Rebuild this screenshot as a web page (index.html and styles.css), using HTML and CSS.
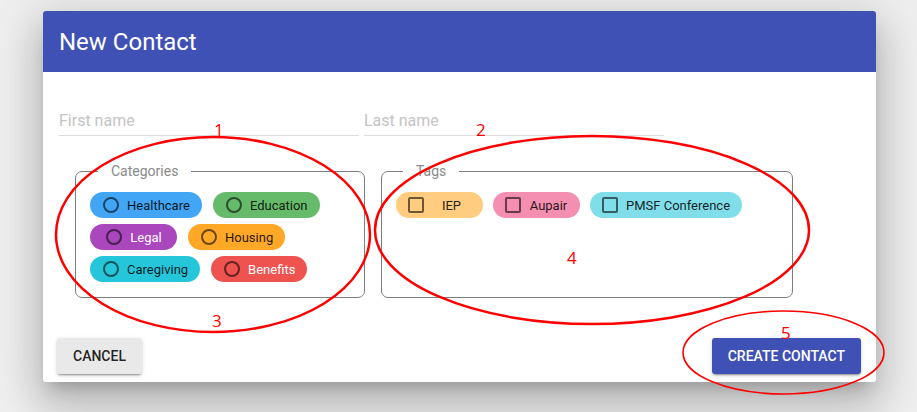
FILE: index.html
```html
<!DOCTYPE html>
<html lang="en">
<head>
<meta charset="utf-8">
<title>New Contact</title>
<link rel="stylesheet" href="styles.css">
</head>
<body>
<div class="dialog">
  <header class="dialog-title">New Contact</header>
  <div class="dialog-content">
    <div class="name-row">
      <input class="text-field" type="text" placeholder="First name">
      <input class="text-field" type="text" placeholder="Last name">
    </div>
    <div class="groups">
      <fieldset class="group group-categories">
        <legend class="group-legend legend-categories">Categories</legend>
        <div class="chips">
          <span class="chip cat chip-healthcare"><span class="radio"></span><span class="chip-label">Healthcare</span></span>
          <span class="chip cat chip-education"><span class="radio"></span><span class="chip-label">Education</span></span>
          <span class="chip cat chip-legal"><span class="radio"></span><span class="chip-label">Legal</span></span>
          <span class="chip cat chip-housing"><span class="radio"></span><span class="chip-label">Housing</span></span>
          <span class="chip cat chip-caregiving"><span class="radio"></span><span class="chip-label">Caregiving</span></span>
          <span class="chip cat chip-benefits"><span class="radio"></span><span class="chip-label">Benefits</span></span>
        </div>
      </fieldset>
      <fieldset class="group group-tags">
        <legend class="group-legend legend-tags">Tags</legend>
        <div class="chips chips-tags">
          <span class="chip tag chip-iep"><span class="checkbox"></span><span class="tag-label">IEP</span></span>
          <span class="chip tag chip-aupair"><span class="checkbox"></span><span class="tag-label">Aupair</span></span>
          <span class="chip tag chip-pmsf"><span class="checkbox"></span><span class="tag-label">PMSF Conference</span></span>
        </div>
      </fieldset>
    </div>
  </div>
  <div class="actions">
    <button class="btn btn-default" type="button">Cancel</button>
    <button class="btn btn-primary" type="button">Create contact</button>
  </div>
</div>

<svg class="annotations" width="917" height="412" viewBox="0 0 917 412" aria-hidden="true">
  <ellipse cx="213" cy="234.5" rx="157" ry="97.5" />
  <ellipse cx="592" cy="230" rx="217" ry="94" />
  <ellipse class="thin" cx="783.5" cy="352.5" rx="100.5" ry="41.5" />
  <text x="214" y="135.5">1</text>
  <text x="476" y="136">2</text>
  <text x="212" y="327">3</text>
  <text x="567" y="264">4</text>
  <text x="781" y="339">5</text>
</svg>
</body>
</html>
```

FILE: styles.css
```css
* {
  box-sizing: border-box;
}

html, body {
  margin: 0;
  height: 100%;
}

body {
  background: #eeeeee;
  padding: 11px 0 0 43px;
  font-family: Roboto, "Liberation Sans", Arial, sans-serif;
  position: relative;
  overflow: hidden;
}

.dialog {
  width: 833px;
  height: 371px;
  background: #ffffff;
  border-radius: 3px;
  display: flex;
  flex-direction: column;
  box-shadow: 0 11px 15px -7px rgba(0, 0, 0, 0.2),
              0 24px 38px 3px rgba(0, 0, 0, 0.14),
              0 9px 46px 8px rgba(0, 0, 0, 0.12);
}

.dialog-title {
  height: 61px;
  background: #3f51b5;
  color: #ffffff;
  border-radius: 3px 3px 0 0;
  display: flex;
  align-items: center;
  padding: 0 16px 0 16px;
  font-size: 24px;
  font-weight: 400;
  line-height: 28px;
}

.dialog-content {
  padding: 34px 16px 0 16px;
}

.name-row {
  display: flex;
  gap: 5px;
}

.text-field {
  width: 300px;
  height: 30px;
  border: 0;
  border-bottom: 1px solid #dddddd;
  padding: 0;
  margin: 0;
  font-family: Roboto, "Liberation Sans", Arial, sans-serif;
  font-size: 16px;
  color: #333333;
  background: transparent;
  outline: none;
}

.text-field::placeholder {
  color: #c4c4c4;
}

.groups {
  display: flex;
  gap: 16px;
  margin-top: 27px;
  padding-left: 16px;
}

.group {
  margin: 0;
  border: 1px solid #7d7d7d;
  border-radius: 7px;
  padding: 13px 14px 15px 14px;
  min-width: 0;
}

.group-categories {
  width: 290px;
}

.group-tags {
  width: 412px;
}

.group-legend {
  font-size: 14px;
  line-height: 16px;
  color: #8a8a8a;
  padding: 0 13px;
}

.legend-categories {
  margin-left: 8px;
}

.legend-tags {
  margin-left: 7px;
}

.chips {
  display: flex;
  flex-wrap: wrap;
  column-gap: 11px;
  row-gap: 6px;
  align-content: flex-start;
}

.chips-tags {
  column-gap: 10px;
}

.chip {
  height: 26px;
  border-radius: 13px;
  display: inline-flex;
  align-items: center;
  font-size: 13px;
  color: rgba(0, 0, 0, 0.87);
  white-space: nowrap;
}

.chip.cat {
  min-width: 87px;
  justify-content: center;
  padding: 0 12px 0 13px;
  gap: 8px;
}

.chip.tag {
  padding: 0 12px;
}

.radio {
  width: 16px;
  height: 16px;
  border: 2px solid rgba(0, 0, 0, 0.58);
  border-radius: 50%;
  flex: none;
}

.checkbox {
  width: 16px;
  height: 16px;
  border: 2px solid rgba(0, 0, 0, 0.58);
  border-radius: 2px;
  flex: none;
}

.tag-label {
  min-width: 39px;
  margin-left: 8px;
  text-align: center;
}

.chip-healthcare { background: #42a5f5; }
.chip-education { background: #66bb6a; }
.chip-legal { background: #ab47bc; color: #ffffff; }
.chip-housing { background: #ffa726; }
.chip-caregiving { background: #26c6da; }
.chip-benefits { background: #ef5350; color: #ffffff; }
.chip-iep { background: #ffcc80; }
.chip-aupair { background: #f48fb1; }
.chip-pmsf { background: #80deea; }

.actions {
  margin-top: auto;
  display: flex;
  justify-content: space-between;
  align-items: center;
  padding: 0 15px 8px 14px;
}

.btn {
  height: 36px;
  padding: 0 16px;
  border: 0;
  border-radius: 3px;
  font-family: Roboto, "Liberation Sans", Arial, sans-serif;
  font-size: 14px;
  font-weight: 500;
  letter-spacing: 0;
  text-transform: uppercase;
  box-shadow: 0 3px 1px -2px rgba(0, 0, 0, 0.2),
              0 2px 2px 0 rgba(0, 0, 0, 0.14),
              0 1px 5px 0 rgba(0, 0, 0, 0.12);
}

.btn-default {
  background: #e9e9e9;
  color: rgba(0, 0, 0, 0.87);
}

.btn-primary {
  background: #3f51b5;
  color: #ffffff;
}

.annotations {
  position: absolute;
  left: 0;
  top: 0;
  pointer-events: none;
}

.annotations ellipse {
  fill: none;
  stroke: #ff0000;
  stroke-width: 2.5;
}

.annotations ellipse.thin {
  stroke-width: 1.6;
}

.annotations text {
  fill: #ff0000;
  font-family: "Open Sans", "Liberation Sans", Arial, sans-serif;
  font-size: 17px;
}
```
